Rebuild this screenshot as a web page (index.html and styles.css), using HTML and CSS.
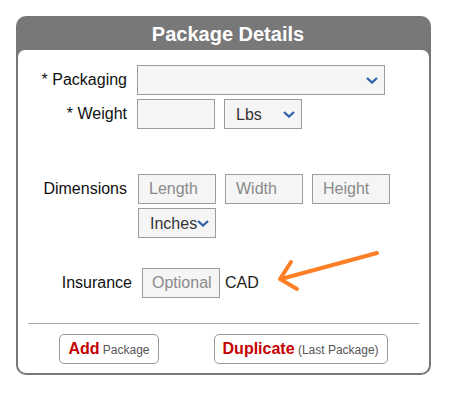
FILE: index.html
```html
<!DOCTYPE html>
<html lang="en">
<head>
    <meta charset="UTF-8">
    <title>Package Details</title>
    <link rel="stylesheet" href="styles.css">
</head>
<body>
    <div class="panel">
        <div class="panel-title">Package Details</div>
        <div class="panel-body">
            <div class="field-row">
                <label class="field-label">* Packaging</label>
                <span class="select-wrap wide">
                    <select class="field-select"><option></option></select>
                    <svg class="chevron" width="12" height="7" viewBox="0 0 12 7"><path d="M1 1 L6 5.5 L11 1" /></svg>
                </span>
            </div>
            <div class="field-row">
                <label class="field-label">* Weight</label>
                <div class="field-group">
                    <input class="field-input" type="text">
                    <span class="select-wrap">
                        <select class="field-select"><option>Lbs</option><option>Kg</option></select>
                        <svg class="chevron" width="12" height="7" viewBox="0 0 12 7"><path d="M1 1 L6 5.5 L11 1" /></svg>
                    </span>
                </div>
            </div>
            <div class="field-row dims">
                <label class="field-label">Dimensions</label>
                <div class="field-group wrap">
                    <input class="field-input" type="text" placeholder="Length">
                    <input class="field-input" type="text" placeholder="Width">
                    <input class="field-input" type="text" placeholder="Height">
                    <span class="select-wrap">
                        <select class="field-select tight"><option>Inches</option><option>cm</option></select>
                        <svg class="chevron" width="12" height="7" viewBox="0 0 12 7"><path d="M1 1 L6 5.5 L11 1" /></svg>
                    </span>
                </div>
            </div>
            <div class="field-row insurance">
                <label class="field-label">Insurance</label>
                <input class="field-input narrow" type="text" placeholder="Optional">
                <span class="unit">CAD</span>
            </div>
            <hr class="divider">
            <div class="actions">
                <button class="btn"><b>Add</b> Package</button>
                <button class="btn"><b>Duplicate</b> (Last Package)</button>
            </div>
        </div>
        <svg class="arrow" width="120" height="50" viewBox="270 245 120 50">
            <path d="M377 253 L281 279 M291 262 L280 279 L297 289" />
        </svg>
    </div>
</body>
</html>
```

FILE: styles.css
```css
body { margin: 0; padding: 16px; font-family: "Liberation Sans", Arial, sans-serif; background-color: #fff; }
.panel { position: relative; width: 411px; border: 2px solid #777; border-radius: 10px; background-color: #787878; }
.panel-title { height: 32px; line-height: 33px; padding-left: 9px; text-align: center; color: #fff; font-size: 20px; font-weight: bold; }
.panel-body { background-color: #fff; border-radius: 7px 7px 8px 8px; padding: 15px 10px 9px; }

.field-row { display: flex; align-items: flex-start; gap: 10px; margin-bottom: 4px; }
.field-label { width: 99px; flex: none; text-align: right; line-height: 30px; font-size: 16px; color: #111; }
.field-group { display: flex; gap: 9px; }
.field-group.wrap { flex-wrap: wrap; width: 252px; row-gap: 4px; margin-left: 1px; }

.field-input, .field-select { box-sizing: border-box; width: 78px; height: 30px; margin: 0; border: 1px solid #9c9c9c; border-radius: 0; background-color: #f5f5f5; font-family: "Liberation Sans", Arial, sans-serif; font-size: 16px; color: #333; }
.field-input { padding: 0 10px; }
.field-input.narrow { padding: 0 4px 0 9px; }
.field-input::placeholder { color: #8a8a8a; }
.field-select { appearance: none; -webkit-appearance: none; padding: 0 22px 0 11px; outline: none; }
.field-select.tight { padding-right: 0; }

.select-wrap { position: relative; display: inline-block; }
.select-wrap.wide .field-select { width: 248px; }
.chevron { position: absolute; right: 7px; top: 12px; pointer-events: none; }
.chevron path { fill: none; stroke: #2f5fa8; stroke-width: 2.3; }

.dims { margin-top: 45px; }
.insurance { margin-top: 30px; align-items: center; gap: 0; }
.insurance .field-label { width: 104px; margin-right: 10px; }
.unit { margin-left: 5px; font-size: 16px; color: #222; }

.divider { margin: 25px 0 10px; border: none; border-top: 1px solid #aaa; }

.actions { display: flex; justify-content: center; gap: 55px; }
.btn { box-sizing: border-box; height: 30px; padding: 0 8px; border: 1px solid #9a9a9a; border-radius: 5px; background-color: #fff; font-family: "Liberation Sans", Arial, sans-serif; font-size: 12px; color: #555; cursor: pointer; }
.btn b { font-size: 16px; color: #c40000; }

.arrow { position: absolute; left: 252px; top: 227px; }
.arrow path { fill: none; stroke: #ff7f27; stroke-width: 4; stroke-linecap: round; stroke-linejoin: round; }
```
